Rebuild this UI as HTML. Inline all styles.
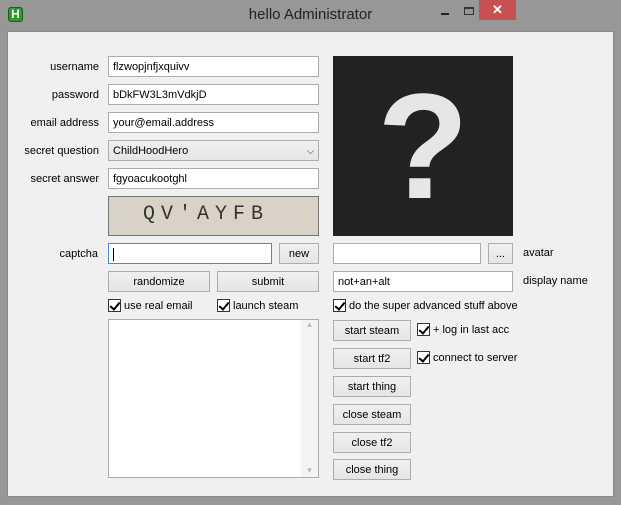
<!DOCTYPE html>
<html><head><style>
*{box-sizing:border-box;margin:0;padding:0}
body{width:621px;height:505px;background:#979797;font-family:"Liberation Sans",sans-serif;font-size:11px;color:#000;position:relative;overflow:hidden}
.a{position:absolute}
.client{left:7px;top:31px;width:607px;height:466px;background:#f0f0f0;border:1px solid #888}
.lbl{position:absolute;text-align:right;width:120px;line-height:14px}
.in{position:absolute;background:#fff;border:1px solid #acacac;height:21px;padding:4px 4px 0;line-height:13px}
.btn{position:absolute;border:1px solid #adadad;background:linear-gradient(#f0f0f0,#e5e5e5);height:21px;text-align:center;line-height:21px}
.cb{position:absolute;width:13px;height:13px;border:1px solid #333;background:#fff}
.cb:after{content:"";position:absolute;left:3px;top:0px;width:4px;height:8px;border:solid #000;border-width:0 2px 2px 0;transform:rotate(40deg)}
.ct{position:absolute;line-height:14px}
</style></head><body>
<div class="a" style="left:8px;top:7px;width:15px;height:15px;background:#2e9a2e;border:1px solid #1a5f1a;border-radius:3px;color:#fff;font-weight:bold;font-size:12px;text-align:center;line-height:13px">H</div>
<div class="a" style="left:0;top:6px;width:621px;text-align:center;font-size:15px;color:#222">hello Administrator</div>
<div class="a" style="left:441px;top:13px;width:8px;height:2px;background:#222"></div>
<div class="a" style="left:464px;top:7px;width:10px;height:8px;border:1px solid #333;border-top-width:2px"></div>
<div class="a" style="left:479px;top:0;width:37px;height:20px;background:#c75050;color:#fff;text-align:center;font-size:13px;font-weight:bold;line-height:20px">✕</div>
<div class="a client"></div>

<div class="lbl" style="left:-21px;top:60px">username</div>
<div class="lbl" style="left:-21px;top:88px">password</div>
<div class="lbl" style="left:-21px;top:116px">email address</div>
<div class="lbl" style="left:-21px;top:144px">secret question</div>
<div class="lbl" style="left:-21px;top:172px">secret answer</div>
<div class="lbl" style="left:-22px;top:247px">captcha</div>

<div class="in" style="left:108px;top:56px;width:211px">flzwopjnfjxquivv</div>
<div class="in" style="left:108px;top:84px;width:211px">bDkFW3L3mVdkjD</div>
<div class="in" style="left:108px;top:112px;width:211px">your@email.address</div>
<div class="btn" style="left:108px;top:140px;width:211px;text-align:left;padding-left:4px">ChildHoodHero<span style="position:absolute;right:4px;top:0;font-size:9px">&#9013;</span></div>
<div class="in" style="left:108px;top:168px;width:211px">fgyoacukootghl</div>
<div class="a" style="left:108px;top:196px;width:211px;height:40px;background:#d8d3c6;border:1px solid #777;font-size:20px;letter-spacing:6px;color:#333;padding:6px 0 0 34px;font-family:'Liberation Mono',monospace">QV'AYFB</div>

<div class="in" style="left:108px;top:243px;width:164px;border-color:#3c8de0"><div style="width:1px;height:13px;background:#000"></div></div>
<div class="btn" style="left:279px;top:243px;width:40px">new</div>
<div class="btn" style="left:108px;top:271px;width:102px">randomize</div>
<div class="btn" style="left:217px;top:271px;width:102px">submit</div>
<div class="cb" style="left:108px;top:299px"></div><div class="ct" style="left:124px;top:299px">use real email</div>
<div class="cb" style="left:217px;top:299px"></div><div class="ct" style="left:233px;top:299px">launch steam</div>
<div class="a" style="left:108px;top:319px;width:211px;height:159px;background:#fff;border:1px solid #acacac"><div style="position:absolute;right:0;top:0;width:17px;height:157px;background:#f4f4f4;color:#bbb;font-size:8px;text-align:center">▲<div style="position:absolute;bottom:2px;width:17px">▼</div></div></div>

<div class="a" style="left:333px;top:56px;width:180px;height:180px;background:#222;color:#e6e6e6;font-size:150px;text-align:center;line-height:180px;font-family:'Liberation Sans',sans-serif;font-weight:bold">?</div>
<div class="in" style="left:333px;top:243px;width:148px"></div>
<div class="btn" style="left:488px;top:243px;width:25px">...</div>
<div class="ct" style="left:523px;top:246px">avatar</div>
<div class="in" style="left:333px;top:271px;width:180px">not+an+alt</div>
<div class="ct" style="left:523px;top:274px">display name</div>
<div class="cb" style="left:333px;top:299px"></div><div class="ct" style="left:349px;top:299px">do the super advanced stuff above</div>
<div class="btn" style="left:333px;top:320px;width:78px">start steam</div>
<div class="cb" style="left:417px;top:323px"></div><div class="ct" style="left:433px;top:323px">+ log in last acc</div>
<div class="btn" style="left:333px;top:348px;width:78px">start tf2</div>
<div class="cb" style="left:417px;top:351px"></div><div class="ct" style="left:433px;top:351px">connect to server</div>
<div class="btn" style="left:333px;top:376px;width:78px">start thing</div>
<div class="btn" style="left:333px;top:404px;width:78px">close steam</div>
<div class="btn" style="left:333px;top:432px;width:78px">close tf2</div>
<div class="btn" style="left:333px;top:459px;width:78px">close thing</div>
</body></html>
